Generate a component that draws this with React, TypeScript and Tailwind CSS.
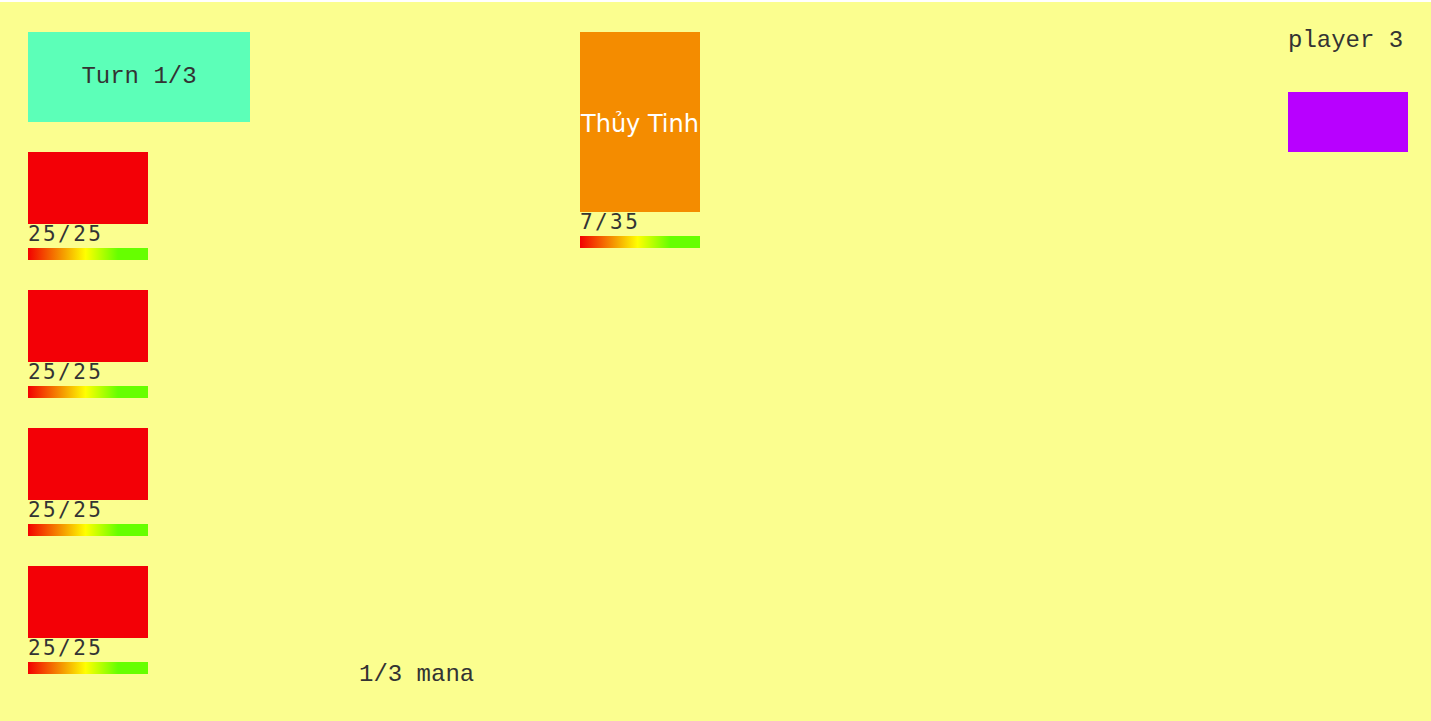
const mono = { fontFamily: '"Liberation Mono", "Courier New", monospace' }

function HealthBar() {
  return (
    <div className="mt-1 h-[12px] w-[120px] bg-[linear-gradient(to_right,#f30000_0%,#f5a000_30%,#ffff00_48%,#66ff00_75%,#66ff00_100%)]" />
  )
}

function HpText({ value }: { value: string }) {
  return (
    <div className="h-[20px] text-[21px] leading-[20px] tracking-[2.4px] text-[#333] font-['DejaVu_Sans_Mono',monospace]">
      {value}
    </div>
  )
}

function Unit({ hp }: { hp: string }) {
  return (
    <div className="flex w-[120px] flex-col">
      <div className="h-[72px] w-[120px] bg-[#f30006]" />
      <HpText value={hp} />
      <HealthBar />
    </div>
  )
}

export default function App() {
  const units = ['25/25', '25/25', '25/25', '25/25']

  return (
    <div className="h-[721px] w-full overflow-hidden bg-white pt-[2px]" style={mono}>
      <div className="flex h-[719px] bg-[#fbfe8f] pl-[28px] pr-[23px] pt-[30px] text-[#333]">
        {/* left: turn + own units */}
        <div className="flex w-[222px] shrink-0 flex-col">
          <div className="flex h-[90px] w-[222px] items-center justify-center bg-[#5cffb8] text-[24px] leading-[24px]">
            Turn 1/3
          </div>
          <div className="mt-[30px] flex flex-col gap-[30px]">
            {units.map((hp, i) => (
              <Unit key={i} hp={hp} />
            ))}
          </div>
        </div>

        {/* middle: enemy + mana */}
        <div className="flex flex-1 flex-col justify-between pb-[34px]">
          <div className="ml-[330px] flex w-[120px] flex-col">
            <div className="flex h-[180px] w-[120px] items-center justify-center overflow-visible whitespace-nowrap bg-[#f48c00] pt-[4px] font-['DejaVu_Sans',sans-serif] text-[24px] text-white">
              Thủy Tinh
            </div>
            <HpText value="7/35" />
            <HealthBar />
          </div>
          <div className="ml-[109px] text-[24px] leading-[24px]">1/3 mana</div>
        </div>

        {/* right: other player */}
        <div className="flex w-[120px] shrink-0 flex-col">
          <div className="-mt-[3px] whitespace-nowrap text-[24px] leading-[24px]">player 3</div>
          <div className="mt-[39px] h-[60px] w-[120px] bg-[#b800ff]" />
        </div>
      </div>
    </div>
  )
}
